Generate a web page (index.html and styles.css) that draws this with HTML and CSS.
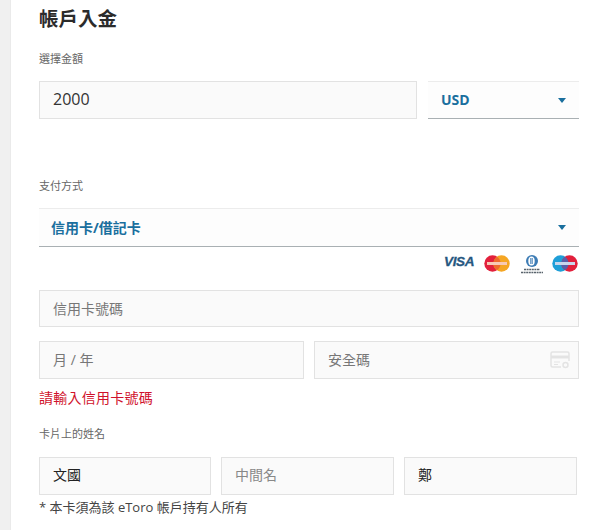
FILE: index.html
```html
<!DOCTYPE html>
<html lang="zh-Hant">
<head>
<meta charset="utf-8">
<title>帳戶入金</title>
<link rel="stylesheet" href="styles.css">
</head>
<body>
<div class="page">
  <div class="rail"></div>
  <main class="form">
    <h1 class="title">帳戶入金</h1>
    <div class="label label-amount">選擇金額</div>
    <div class="row row-amount">
      <div class="field field-grow filled">2000</div>
      <div class="select select-currency"><span>USD</span><i class="caret"></i></div>
    </div>
    <div class="label label-method">支付方式</div>
    <div class="select select-method"><span>信用卡/借記卡</span><i class="caret"></i></div>
    <div class="cards">
      <span class="visa">VISA</span>
      <svg class="card" width="26" height="17" viewBox="0 0 26 17"><circle cx="8.500" cy="8.500" r="8.200" fill="#e2203c"/><circle cx="17.500" cy="8.500" r="8.200" fill="#f5a623"/><path d="M13 1.700a8.200 8.200 0 0 1 0 13.600a8.200 8.200 0 0 1 0-13.600z" fill="#ee6a2c"/><rect x="3" y="7" width="20" height="3" fill="#f7c9b5"/></svg>
      <svg class="card card-diners" width="24" height="19" viewBox="0 0 24 19"><circle cx="12" cy="6" r="6" fill="#3d7cb5"/><ellipse cx="11.500" cy="6" rx="3.200" ry="4.600" fill="#fff"/><path d="M10.800 3v6M12.200 3v6" stroke="#3d7cb5" stroke-width="1"/><path d="M4 14.500h16M1 17.500h22" stroke="#59636c" stroke-width="1.500" stroke-dasharray="2 .6"/></svg>
      <svg class="card" width="26" height="17" viewBox="0 0 26 17"><circle cx="8.500" cy="8.500" r="8.200" fill="#1f9fd8"/><circle cx="17.500" cy="8.500" r="8.200" fill="#e2203c"/><path d="M13 1.700a8.200 8.200 0 0 1 0 13.600a8.200 8.200 0 0 1 0-13.600z" fill="#5a5fa8"/><rect x="3" y="7" width="20" height="3" fill="#c9d6ec"/></svg>
    </div>
    <div class="field">信用卡號碼</div>
    <div class="row-expiry">
      <div class="field field-tall">月 / 年</div>
      <div class="field field-tall field-cvv">安全碼
        <svg class="cvv-icon" width="20" height="18" viewBox="0 0 20 18"><path d="M11 16H2.500A1.500 1.500 0 0 1 1 14.500v-12A1.500 1.500 0 0 1 2.500 1h15A1.500 1.500 0 0 1 19 2.500V10" fill="none" stroke="#e3e3e3" stroke-width="1.500"/><rect x="1" y="4.500" width="18" height="3" fill="#e3e3e3"/><path d="M4 11h6M4 13.500h4" stroke="#e3e3e3" stroke-width="1.200"/><circle cx="15.500" cy="14" r="2.500" fill="none" stroke="#e3e3e3" stroke-width="1.500"/></svg>
      </div>
    </div>
    <div class="error">請輸入信用卡號碼</div>
    <div class="label label-name">卡片上的姓名</div>
    <div class="row row-name">
      <div class="field field-name name-first filled-dark">文國</div>
      <div class="field field-name field-middle">中間名</div>
      <div class="field field-name filled-dark">鄭</div>
    </div>
    <div class="note">* 本卡須為該 eToro 帳戶持有人所有</div>
  </main>
</div>
</body>
</html>
```

FILE: styles.css
```css
* { box-sizing: border-box; }
html, body { margin: 0; height: 100%; overflow: hidden; background: #fff; }
body {
  font-family: "Open Sans", "Noto Sans CJK TC", "Liberation Sans", sans-serif;
  color: #333;
}
.page { display: flex; height: 530px; }
.rail { width: 11px; flex: none; background: #f0f0f0; border-right: 1px solid #eaeaea; }
.form { width: 540px; margin-left: 28px; flex: none; }
.title {
  margin: 5px 0 0;
  font-size: 19.500px;
  line-height: 28px;
  font-weight: 700;
  color: #2b2b2b;
}
.label { font-size: 11px; line-height: 16px; color: #666; }
.label-amount { margin-top: 18px; }
.label-method { margin-top: 59px; }
.label-name { margin-top: 18px; }
.row { display: flex; }
.row-amount { margin-top: 14px; gap: 11px; }
.row-expiry {
  margin-top: 14px;
  display: grid;
  grid-template-columns: 1fr 1fr;
  gap: 10px;
}
.row-name { margin-top: 15px; gap: 10px; }
.field {
  height: 37px;
  display: flex;
  align-items: center;
  padding: 0 13px 2px;
  background: #fafafa;
  border: 1px solid #e2e2e2;
  font-size: 14px;
  color: #777;
}
.field-grow { flex: 1; height: 38px; }
.filled { font-size: 16px; color: #333; }
.field-tall { height: 38px; }
.field-cvv { justify-content: space-between; padding-right: 8px; }
.cvv-icon { display: block; margin-top: 1px; }
.field-name { width: 173px; height: 38px; padding-bottom: 4px; }
.name-first { width: 172px; }
.field-middle { color: #888; }
.filled-dark { color: #222; }
.select {
  display: flex;
  align-items: center;
  justify-content: space-between;
  background: #fdfdfd;
  border-top: 1px solid #ececec;
  border-bottom: 1px solid #a9b0b3;
  font-size: 14px;
  font-weight: 700;
  color: #1a6f9e;
}
.select-currency { width: 151px; height: 38px; padding: 0 13px 2px; }
.select-method { margin-top: 14px; height: 39px; padding: 0 13px 2px 12px; }
.caret {
  width: 0;
  height: 0;
  margin-top: 2px;
  border-left: 4.500px solid transparent;
  border-right: 4.500px solid transparent;
  border-top: 5px solid #1a6f9e;
}
.cards {
  height: 43px;
  padding: 5px 1px 0 0;
  display: flex;
  justify-content: flex-end;
  align-items: flex-start;
  gap: 10px;
}
.card { display: block; margin-top: 3px; }
.card-diners { margin-right: -2px; }
.visa {
  font-family: "Liberation Sans", sans-serif;
  font-size: 13.500px;
  line-height: 20px;
  font-weight: 700;
  font-style: italic;
  letter-spacing: -.4px;
  color: #26577f;
  -webkit-text-stroke: .3px #26577f;
}
.error { margin-top: 9px; font-size: 14px; line-height: 20px; letter-spacing: .25px; color: #d0112b; }
.note { margin-top: 4px; font-size: 13px; line-height: 16px; color: #444; }
```
